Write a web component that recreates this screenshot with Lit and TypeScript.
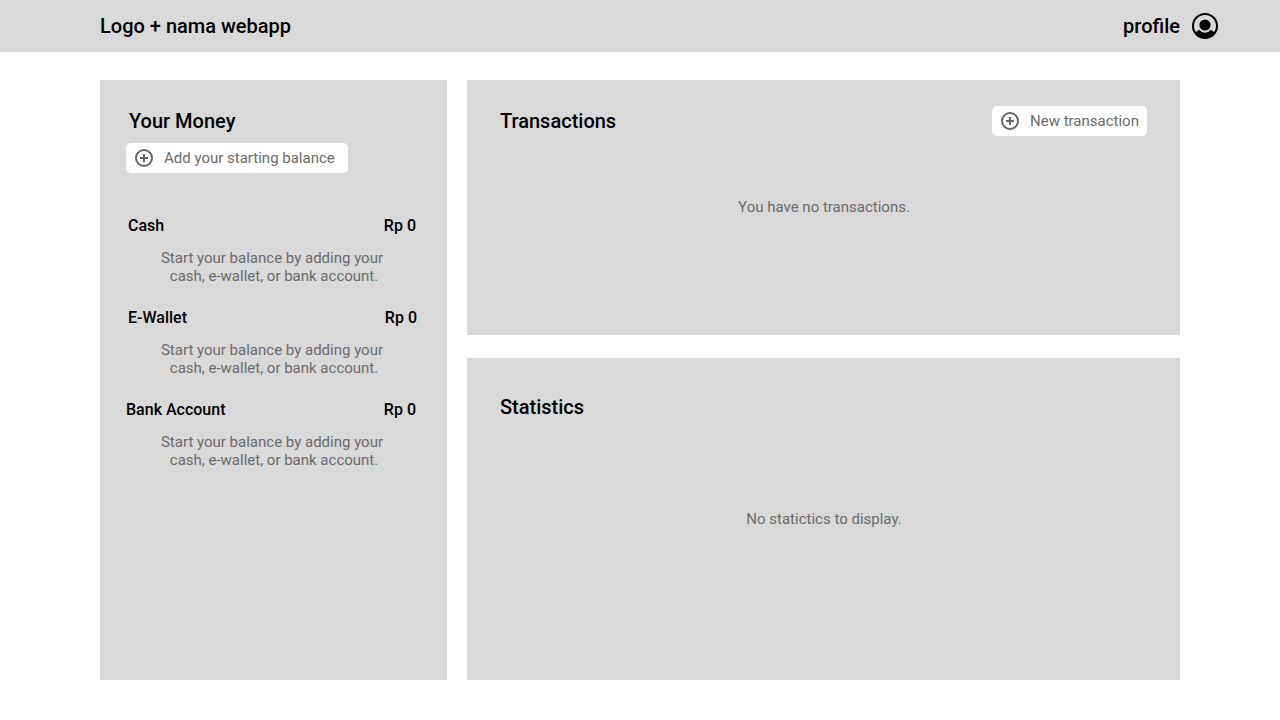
import { LitElement, html, css } from "lit";
import { customElement, property } from "lit/decorators.js";

@customElement("add-button")
class AddButton extends LitElement {
  @property() label = "";
  static styles = css`
    :host { display: block; }
    .button {
      display: flex; align-items: center; gap: 8px; width: 100%; height: 30px;
      padding: 0 0 0 6px; border: 0; border-radius: 5px; background: #fff;
      color: #6b6b6b; font: 400 15px/18px Roboto, sans-serif; white-space: nowrap;
    }
    .icon { flex: none; width: 24px; height: 24px; }
  `;
  render() {
    return html`<button class="button">
      <svg class="icon" viewBox="0 0 24 24" fill="none" stroke="#666" stroke-width="2">
        <circle cx="12" cy="12" r="8" /><path d="M12 8v8M8 12h8" />
      </svg><span>${this.label}</span></button>`;
  }
}

@customElement("app-root")
class AppRoot extends LitElement {
  static styles = css`
    :host { display: block; width: 1280px; height: 720px; background: #fff; color: #000; font-family: Roboto, sans-serif; }
    * { box-sizing: border-box; }
    .header { display: flex; align-items: center; justify-content: space-between; height: 52px; padding: 0 60px 0 100px; background: #d9d9d9; }
    .title { margin: 0; font-size: 20px; line-height: 24px; font-weight: 500; }
    .profile { display: flex; align-items: center; gap: 10px; }
    .avatar { width: 30px; height: 30px; }
    .main { display: grid; grid-template-columns: 347px 713px; grid-template-rows: 255px 322px; gap: 23px 20px; padding: 28px 100px 40px; }
    .panel { background: #d9d9d9; }
    .money { grid-row: span 2; padding: 29px 30px 0 26px; }
    .money .title { padding-left: 3px; }
    .start { width: 222px; margin-top: 10px; }
    .accounts { display: grid; gap: 20px; margin-top: 42px; }
    .account { height: 72px; }
    .row { display: flex; justify-content: space-between; font-size: 16px; line-height: 22px; font-weight: 500; padding: 0 1px 0 2px; }
    .ewallet .row { padding-right: 0; }
    .bank .row { padding-left: 0; }
    .hint { margin: 0; color: #6b6b6b; font-size: 15px; line-height: 18px; text-align: center; }
    .account .hint { padding: 12px 0 0 1px; }
    .line { display: block; }
    .second { padding-left: 4px; }
    .transactions { padding: 26px 33px 0; }
    .bar { display: flex; align-items: center; justify-content: space-between; }
    .new { width: 155px; }
    .transactions .hint { padding: 62px 0 0 1px; }
    .statistics { padding: 37px 33px 0; }
    .statistics .hint { padding: 91px 0 0 1px; }
  `;
  accounts = [
    { name: "Cash", kind: "cash" },
    { name: "E-Wallet", kind: "ewallet" },
    { name: "Bank Account", kind: "bank" },
  ];
  render() {
    return html`
      <header class="header">
        <h1 class="title">Logo + nama webapp</h1>
        <div class="profile">
          <span class="title">profile</span>
          <svg class="avatar" viewBox="0 0 30 30">
            <defs><clipPath id="rim"><circle cx="15" cy="15" r="12.5" /></clipPath></defs>
            <circle cx="15" cy="15" r="12" fill="none" stroke="#000" stroke-width="2" />
            <circle cx="15" cy="14" r="5.600" />
            <path clip-path="url(#rim)" d="M4 22.500L9 18.800Q11.500 21.700 15 21.700T21 18.800L26 22.500V29H4z" />
          </svg>
        </div>
      </header>
      <main class="main">
        <section class="panel money">
          <h2 class="title">Your Money</h2>
          <add-button class="start" label="Add your starting balance"></add-button>
          <div class="accounts">
            ${this.accounts.map((a) => html`<div class="account ${a.kind}">
              <div class="row"><span>${a.name}</span><span>Rp 0</span></div>
              <p class="hint"><span class="line">Start your balance by adding your</span><span class="line second">cash, e-wallet, or bank account.</span></p>
            </div>`)}
          </div>
        </section>
        <section class="panel transactions">
          <div class="bar"><h2 class="title">Transactions</h2><add-button class="new" label="New transaction"></add-button></div>
          <p class="hint">You have no transactions.</p>
        </section>
        <section class="panel statistics">
          <h2 class="title">Statistics</h2>
          <p class="hint">No statictics to display.</p>
        </section>
      </main>`;
  }
}
